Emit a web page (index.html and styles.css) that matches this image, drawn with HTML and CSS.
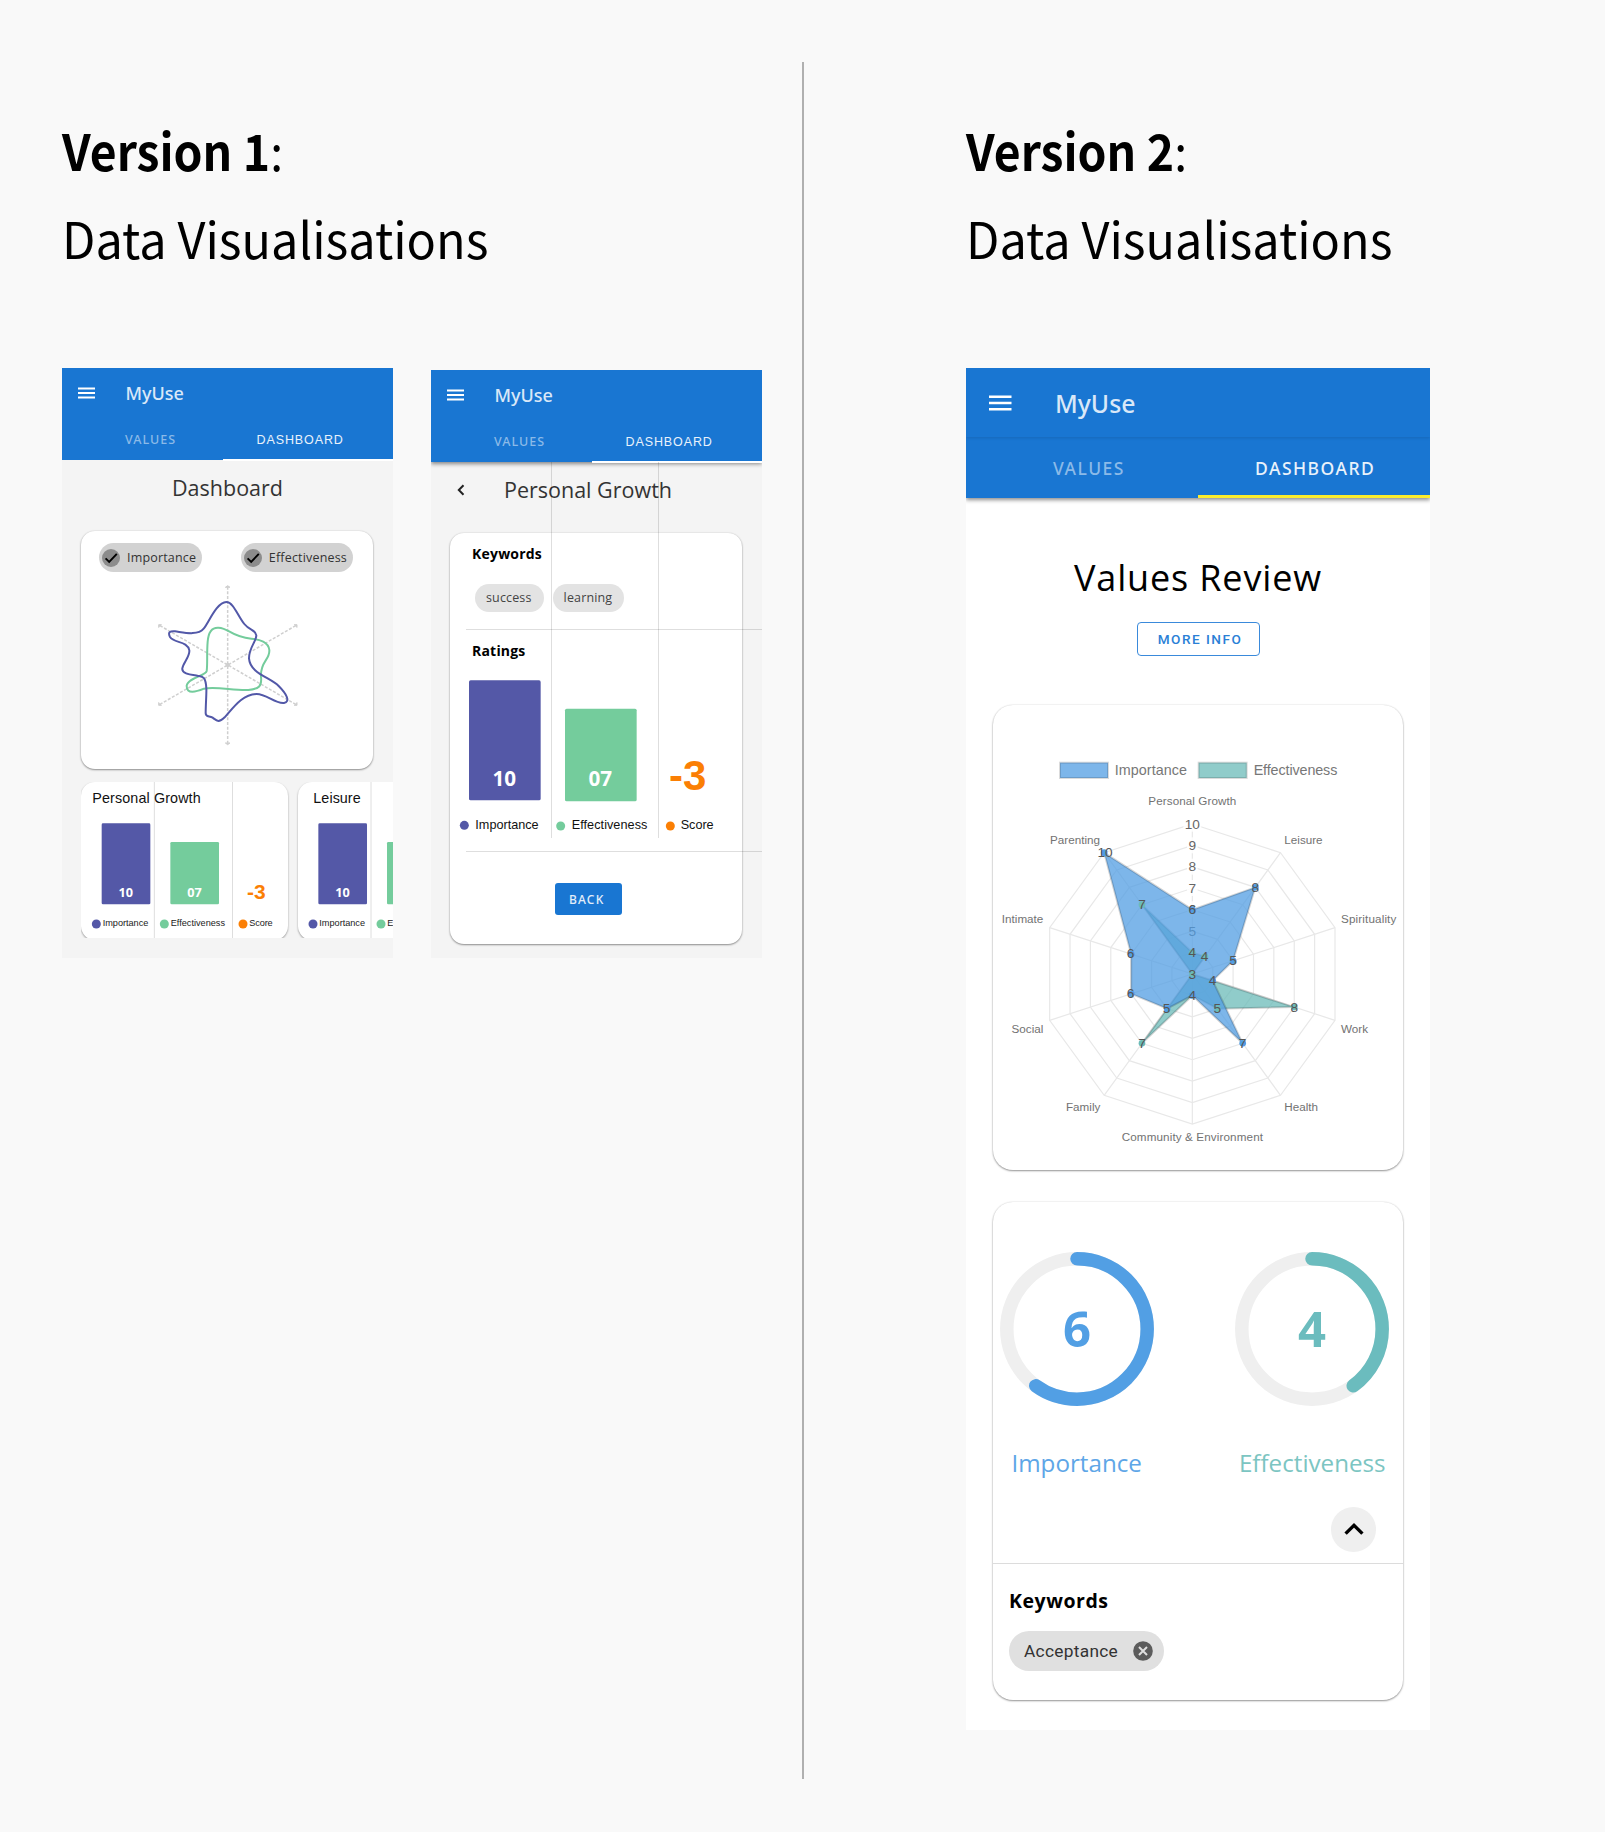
FILE: index.html
```html
<!DOCTYPE html>
<html lang="en">
<head>
<meta charset="utf-8">
<title>Data Visualisations</title>
<link rel="stylesheet" href="styles.css">
</head>
<body>
<main class="board">
  <section class="version version-one">
    <h2 class="heading"><span class="heading-main"><b>Version 1</b>:</span><span class="heading-sub">Data Visualisations</span></h2>
    <div class="phones">
      <article class="phone small">
        <header class="appbar">
          <div class="brand"><svg class="burger" viewBox="0 0 18 12"><path d="M0 1.2h18M0 6h18M0 10.8h18"/></svg><span class="name">MyUse</span></div>
          <nav class="tabs"><span class="tab">VALUES</span><span class="tab active plain">DASHBOARD</span></nav>
        </header>
        <div class="screen-title"><span class="title-text">Dashboard</span></div>
        <section class="card overview">
          <div class="filters">
            <span class="filter"><svg class="check" viewBox="0 0 18 18"><circle cx="9" cy="9" r="9"/><path d="M3.6 9.4l3.6 3.5 7.6-8"/></svg><span class="filter-text">Importance</span></span>
            <span class="filter"><svg class="check" viewBox="0 0 18 18"><circle cx="9" cy="9" r="9"/><path d="M3.6 9.4l3.6 3.5 7.6-8"/></svg><span class="filter-text">Effectiveness</span></span>
          </div>
          <svg class="blob" viewBox="93 60 876 510">
            <g class="axes">
              <path d="M533 80V551M330 197L737 433M737 197L330 433"/>
            </g>
            <g class="tips"><path d="M526 82l7-5 7 5zM526 549l7 5 7-5zM326 203V194h9M741 203V194h-9M326 427v9h9M741 427v9h-9"/><circle cx="533" cy="315" r="5"/></g>
            <path class="eff" d="M505 203C484 202 475 218 473 245C470 280 473 315 470 333C467 348 415 352 410 377C409 405 440 395 462 386C500 379 550 392 595 390C628 387 636 378 633 350C630 305 660 300 658 270C655 245 630 239 604 236C540 230 540 205 505 203Z"/>
            <path class="imp" d="M529 126C550 126 563 167 583 192C600 213 615 207 619 226C619 245 597 262 597 295C600 340 660 352 686 378C710 402 722 425 702 429C675 432 650 402 620 402C575 402 545 450 524 472C505 490 500 482 488 473C478 467 467 473 467 460C467 435 470 395 469 385C467 345 455 350 442 347C425 344 394 342 397 325C400 307 420 290 418 271C412 242 372 250 360 231C352 215 362 213 375 214C400 217 443 228 461 206C475 190 500 126 529 126Z"/>
          </svg>
        </section>
        <div class="carousel">
          <section class="mini">
            <svg viewBox="93 51 620 468" class="mini-chart">
              <path class="rule" d="M313 51V519M547.500 51V519"/>
              <text class="mini-title" x="127" y="115" textLength="325">Personal Growth</text>
              <rect class="bar-imp" x="155" y="175" width="146" height="243" rx="4"/>
              <rect class="bar-eff" x="361" y="231" width="146" height="187" rx="4"/>
              <text class="mini-num" x="227.500" y="396">10</text><text class="mini-num" x="433.500" y="396">07</text>
              <text class="mini-score" x="619" y="403">-3</text>
              <circle class="dot-imp" cx="139" cy="477" r="13.500"/><text class="mini-key" x="158" y="483" textLength="137">Importance</text>
              <circle class="dot-eff" cx="343" cy="477" r="13.500"/><text class="mini-key" x="362" y="483" textLength="163">Effectiveness</text>
              <circle class="dot-score" cx="579" cy="477" r="13.500"/><text class="mini-key" x="598" y="483" textLength="70">Score</text>
            </svg>
          </section>
          <section class="mini">
            <svg viewBox="743 51 620 468" class="mini-chart">
              <path class="rule" d="M962 51V519"/>
              <text class="mini-title" x="789" y="115" textLength="142">Leisure</text>
              <rect class="bar-imp" x="804" y="175" width="146" height="243" rx="4"/>
              <rect class="bar-eff" x="1010" y="231" width="146" height="187" rx="4"/>
              <text class="mini-num" x="876.500" y="396">10</text>
              <circle class="dot-imp" cx="788" cy="477" r="13.500"/><text class="mini-key" x="807" y="483" textLength="137">Importance</text>
              <circle class="dot-eff" cx="992" cy="477" r="13.500"/><text class="mini-key" x="1011" y="483" textLength="163">Effectiveness</text>
            </svg>
          </section>
        </div>
      </article>

      <article class="phone small detail">
        <header class="appbar raised">
          <div class="brand"><svg class="burger" viewBox="0 0 18 12"><path d="M0 1.2h18M0 6h18M0 10.8h18"/></svg><span class="name">MyUse</span></div>
          <nav class="tabs"><span class="tab">VALUES</span><span class="tab active plain">DASHBOARD</span></nav>
        </header>
        <div class="screen-title with-back"><svg class="back-arrow" viewBox="0 0 8 12"><path d="M6.500 1.200L1.800 6l4.700 4.800"/></svg><span class="title-text">Personal Growth</span></div>
        <section class="card sheet">
          <h3 class="label">Keywords</h3>
          <div class="tags"><span class="tag">success</span><span class="tag">learning</span></div>
          <h3 class="label ratings">Ratings</h3>
          <svg class="ratings-chart" viewBox="90 138 876 480">
            <rect class="bar-imp" x="147" y="151" width="215" height="360" rx="5"/>
            <rect class="bar-eff" x="435" y="236" width="215" height="278" rx="5"/>
            <text class="big-num" x="253" y="469">10</text><text class="big-num" x="541" y="469">07</text>
            <text class="big-score" x="803" y="480">-3</text>
            <circle class="dot-imp" cx="133" cy="586" r="13.500"/><text class="key" x="166" y="597" textLength="190">Importance</text>
            <circle class="dot-eff" cx="422" cy="588" r="13.500"/><text class="key" x="455" y="597" textLength="227">Effectiveness</text>
            <circle class="dot-score" cx="751" cy="588" r="13.500"/><text class="key" x="782" y="597" textLength="99">Score</text>
          </svg>
          <div class="actions"><button class="back">BACK</button></div>
        </section>
        <i class="guide v1"></i><i class="guide v2"></i><i class="guide h1"></i><i class="guide h2"></i>
      </article>
    </div>
  </section>

  <div class="divider"></div>

  <section class="version version-two">
    <h2 class="heading"><span class="heading-main"><b>Version 2</b>:</span><span class="heading-sub">Data Visualisations</span></h2>
    <article class="phone large">
      <header class="appbar raised">
        <div class="brand"><svg class="burger" viewBox="0 0 24 16"><path d="M0 1.400h24M0 8h24M0 14.600h24"/></svg><span class="name">MyUse</span></div>
        <nav class="tabs"><span class="tab">VALUES</span><span class="tab active">DASHBOARD</span></nav>
      </header>
      <h1 class="review">Values Review</h1>
      <button class="more">MORE INFO</button>
      <section class="card radar-card">
        <svg class="radar" viewBox="39 45 1230 1395">
          <g class="legend">
            <rect class="key-imp" x="240" y="218" width="144" height="46"/><text x="404" y="255" textLength="217">Importance</text>
            <rect class="key-eff" x="656" y="218" width="144" height="46"/><text x="821" y="255" textLength="251">Effectiveness</text>
          </g>
          <g transform="translate(637 852)">
            <defs><polygon id="ring" points="0,-450 264.500,-364 428,-139 428,139 264.500,364 0,450 -264.500,364 -428,139 -428,-139 -264.500,-364"/></defs>
            <g class="grid">
              <use href="#ring"/><use href="#ring" transform="scale(.8571)"/><use href="#ring" transform="scale(.7143)"/><use href="#ring" transform="scale(.5714)"/><use href="#ring" transform="scale(.4286)"/><use href="#ring" transform="scale(.2857)"/><use href="#ring" transform="scale(.1429)"/>
              <path d="M0-450V450M264.500-364L-264.500 364M428-139L-428 139M428 139L-428-139M264.500 364L-264.500-364"/>
            </g>
            <g class="backdrop"><rect x="-27" y="-475" width="54" height="48"/><rect x="-16" y="-410" width="32" height="48"/><rect x="-16" y="-346" width="32" height="48"/><rect x="-16" y="-282" width="32" height="48"/><rect x="-16" y="-218" width="32" height="48"/></g>
            <g class="ticks"><text y="-436">10</text><text y="-372">9</text><text y="-308">8</text><text y="-243">7</text><text y="-179">6</text><text y="-115">5</text></g>
            <polygon class="area-eff" points="0,-64.300 37.800,-52 0,0 305.700,99.300 75.600,104 0,64.300 -151.100,208 0,0 -151.100,-208"/>
            <polygon class="area-imp" points="0,-192.900 188.900,-260 122.300,-39.700 61.100,19.900 151.100,208 0,64.300 -75.600,104 -183.400,59.600 -183.400,-59.600 -264.500,-364"/>
            <g class="points-eff"><circle cy="-64.300" r="10"/><circle cx="37.800" cy="-52" r="10"/><circle r="10"/><circle cx="305.700" cy="99.300" r="10"/><circle cx="75.600" cy="104" r="10"/><circle cx="-151.100" cy="208" r="10"/><circle cx="-151.100" cy="-208" r="10"/></g>
            <g class="points-imp"><circle cy="-192.900" r="10"/><circle cx="188.900" cy="-260" r="10"/><circle cx="122.300" cy="-39.700" r="10"/><circle cx="61.100" cy="19.900" r="10"/><circle cx="151.100" cy="208" r="10"/><circle cy="64.300" r="10"/><circle cx="-75.600" cy="104" r="10"/><circle cx="-183.400" cy="59.600" r="10"/><circle cx="-183.400" cy="-59.600" r="10"/><circle cx="-264.500" cy="-364" r="10"/></g>
            <g class="values"><text y="-179">6</text><text x="189" y="-246">8</text><text x="122" y="-26">5</text><text x="61" y="33">4</text><text x="151" y="221">7</text><text y="77">4</text><text x="-77" y="118">5</text><text x="-185" y="73">6</text><text x="-185" y="-47">6</text><text x="-262" y="-351">10</text><text y="-51">4</text><text x="37" y="-38">4</text><text y="14">3</text><text x="306" y="113">8</text><text x="75" y="118">5</text><text x="-151" y="221">7</text><text x="-151" y="-195">7</text></g>
          </g>
          <g class="names">
            <text x="505" y="344" textLength="264">Personal Growth</text><text x="913" y="463">Leisure</text><text x="1083" y="698" textLength="166">Spirituality</text><text x="1083" y="1030">Work</text><text x="913" y="1264">Health</text>
            <text x="425" y="1353" textLength="424">Community &amp; Environment</text><text class="end" x="361" y="1264">Family</text><text class="end" x="190" y="1030">Social</text><text class="end" x="190" y="698">Intimate</text><text class="end" x="360" y="463">Parenting</text>
          </g>
        </svg>
      </section>
      <section class="card scores">
        <div class="gauges">
          <figure class="gauge imp-gauge"><svg viewBox="0 0 154 154"><circle class="track" cx="77" cy="77" r="70.200"/><circle class="value" cx="77" cy="77" r="70.200" pathLength="10" stroke-dasharray="6 10" transform="rotate(-90 77 77)"/><text x="77" y="95">6</text></svg><figcaption>Importance</figcaption></figure>
          <figure class="gauge eff-gauge"><svg viewBox="0 0 154 154"><circle class="track" cx="77" cy="77" r="70.200"/><circle class="value" cx="77" cy="77" r="70.200" pathLength="10" stroke-dasharray="4 10" transform="rotate(-90 77 77)"/><text x="77" y="95">4</text></svg><figcaption>Effectiveness</figcaption></figure>
        </div>
        <div class="collapse"><button class="toggle"><svg viewBox="0 0 20 13"><path d="M1.600 10.600L10 2.400l8.400 8.200"/></svg></button></div>
        <div class="keywords">
          <h3>Keywords</h3>
          <span class="chip"><span class="chip-text">Acceptance</span><svg class="remove" viewBox="0 0 20 20"><circle cx="10" cy="10" r="9.800"/><path d="M6 6l8 8M14 6l-8 8"/></svg></span>
        </div>
      </section>
    </article>
  </section>
</main>
</body>
</html>
```
FILE: styles.css
```css
* { box-sizing: border-box; }
body { margin: 0; background: #f9f9f9; font-family: "Open Sans", "Noto Sans", sans-serif; color: #000; }
h1, h2, h3, figure { margin: 0; font-weight: 400; }
button { font-family: inherit; margin: 0; padding: 0; border: 0; }
svg { display: block; }

.board { display: flex; height: 1832px; overflow: hidden; }
.version { padding-top: 105px; }
.version-one { width: 802px; padding-left: 62px; }
.version-two { padding-left: 162.500px; }
.divider { width: 1.5px; height: 1717px; margin-top: 62px; background: #b0b0b0; }

.heading { height: 263px; font: 50px/88px "Noto Sans CJK SC", "Noto Sans", sans-serif; }
.heading-main, .heading-sub { display: block; width: max-content; transform-origin: left; }
.heading-main { transform: scaleX(.927); }
.heading-sub { transform: scaleX(.972); }

.phones { display: flex; align-items: flex-start; gap: 38px; }
.phone { position: relative; overflow: hidden; }
.small { width: 331px; height: 590px; background: #f4f4f4; }
.detail { height: 588px; margin-top: 2px; }
.large { width: 464px; height: 1362px; background: #fff; }

.appbar { position: relative; background: #1976d2; color: #fff; }
.raised { box-shadow: 0 2px 4px rgba(0, 0, 0, .45); }
.brand { display: flex; align-items: center; }
.burger path { stroke: #fff; fill: none; }
.name { color: #d9e8f8; font-family: "Noto Sans", sans-serif; font-weight: 500; }
.tabs { display: grid; }
.tab { color: #8bbae8; font-family: "Noto Sans", sans-serif; font-weight: 500; }
.tab.active { position: relative; color: #e9f2fb; }
.tab.active::after { content: ""; position: absolute; left: 0; right: 0; bottom: 0; background: #fff; }

.small .appbar { height: 92px; }
.small .brand { height: 50px; padding-left: 16px; }
.small .burger { width: 17px; height: 12px; }
.small .burger path { stroke-width: 2; }
.small .name { margin-left: 30.500px; font-size: 18px; line-height: 50px; }
.small .tabs { grid-template: 42px / 160.500px 1fr; }
.small .tab { padding-left: 63px; font-size: 12.500px; line-height: 44px; letter-spacing: 1.050px; }
.small .tab.active { padding-left: 34px; }
.small .tab.plain { font-family: "Liberation Sans", sans-serif; font-weight: 400; letter-spacing: .900px; }
.small .tab.active::after { height: 2px; bottom: -1px; }

.screen-title { height: 71px; font-size: 21.500px; line-height: 55px; text-align: center; color: #333; }
.with-back { display: flex; text-align: left; }
.back-arrow { width: 8px; height: 12px; margin: 22px 39px 0 26px; }
.back-arrow path { fill: none; stroke: #222; stroke-width: 2; }

.card { background: #fff; border-radius: 14px; box-shadow: 0 1px 2px rgba(0, 0, 0, .4), 0 0 2px rgba(0, 0, 0, .12); }
.small .card { width: 292px; margin-left: 19px; }
.overview { height: 238px; padding-top: 12px; }
.filters { display: flex; justify-content: space-between; padding: 0 20px 0 18px; }
.filter { display: flex; align-items: center; height: 29px; padding: 0 6px 0 3px; border-radius: 15px; background: #d2d2d2; color: #333; font-size: 12.500px; letter-spacing: .180px; }
.check { width: 18px; height: 18px; margin-right: 7px; }
.check circle { fill: #8c8c8c; }
.check path { fill: none; stroke: #000; stroke-width: 1.900; }
.blob { width: 292px; height: 170px; margin-top: 8px; }
.axes path { fill: none; stroke: #cfcfcf; stroke-width: 4.500; stroke-dasharray: 9 5; }
.tips path, .tips circle { fill: #d0d0d0; stroke: #d0d0d0; stroke-width: 3; }
.blob .imp, .blob .eff { fill: none; stroke-width: 6; }
.blob .imp { stroke: #5258a8; }
.blob .eff { stroke: #74cc9c; }

.carousel { display: flex; gap: 9.600px; margin: 13px 0 0 19.300px; height: 156px; overflow: hidden; }
.mini { flex: none; width: 206.700px; height: 158px; border-radius: 14px; background: #fff; box-shadow: 0 1px 2px rgba(0, 0, 0, .4); overflow: hidden; }
.mini-chart { width: 206.700px; height: 156px; }
.rule { stroke: #dedede; stroke-width: 3; }
.bar-imp, .dot-imp { fill: #5458a7; }
.bar-eff, .dot-eff { fill: #74cc9c; }
.dot-score { fill: #fb7f04; }
.mini-title { font: 43px "Liberation Sans", sans-serif; fill: #111; }
.mini-key { font: 27.500px "Liberation Sans", sans-serif; fill: #222; }
.key { font: 38px "Liberation Sans", sans-serif; fill: #111; }
.mini-num, .big-num { font: 700 38px "Open Sans", sans-serif; fill: #fff; text-anchor: middle; }
.big-num { font-size: 62px; }
.mini-score, .big-score { font: 700 63px "Liberation Sans", sans-serif; fill: #fb7f04; text-anchor: middle; }
.big-score { font-size: 126px; }

.sheet { height: 411px; }
.label { height: 43px; padding-left: 22px; font-size: 14px; font-weight: 700; line-height: 42px; letter-spacing: .200px; }
.tags { display: flex; gap: 9px; padding: 8px 0 0 25px; }
.tag { height: 28px; padding: 0 12px 0 11px; border-radius: 14px; background: #e3e3e3; color: #444; font-size: 12.500px; line-height: 28px; letter-spacing: .150px; }
.label.ratings { margin-top: 18px; line-height: 42px; height: 46px; }
.ratings-chart { width: 292px; height: 160px; }
.actions { display: flex; margin: 47px 0 0 105px; }
.back { width: 66.500px; height: 31.500px; padding: 1px 3px 0 0; text-align: center; border-radius: 3px; background: #1976d2; color: #e3eefa; font: 500 12px "Noto Sans", sans-serif; letter-spacing: 1.200px; }
.guide { position: absolute; background: rgba(0, 0, 0, .13); }
.v1, .v2 { top: 92px; width: 1px; height: 376px; }
.v1 { left: 120px; }
.v2 { left: 227px; }
.h1, .h2 { left: 35px; right: 0; height: 1px; }
.h1 { top: 259px; }
.h2 { top: 481px; }

.large .appbar { height: 130px; }
.large .brand { height: 69px; padding-left: 23px; box-shadow: 0 1px 3px rgba(0, 0, 0, .12); }
.large .burger { width: 22.500px; height: 16px; }
.large .burger path { stroke-width: 2.700; }
.large .name { margin-left: 43.500px; padding-top: 1px; font-size: 24.800px; line-height: 69px; }
.large .tabs { grid-template: 61px / 1fr 1fr; }
.large .tab { padding-left: 87px; font-size: 17.500px; line-height: 62px; letter-spacing: 1.500px; }
.large .tab.active { padding-left: 57px; }
.large .tab.active::after { height: 3px; background: #fbec2d; }
.review { height: 124px; padding-top: 50px; font-size: 36px; line-height: 60px; letter-spacing: .850px; text-align: center; }
.more { display: block; width: 123px; height: 34px; margin: 0 auto; padding: 0 0 0 4px; border: 1.500px solid #3a8adb; border-radius: 4px; background: #fff; color: #2a80d6; font: 500 13.600px Roboto, sans-serif; letter-spacing: 1.500px; }
.large .card { width: 410px; margin-left: 27px; border-radius: 20px; }
.radar-card { height: 465px; margin-top: 49px; }
.radar { width: 410px; height: 465px; font-family: "Liberation Sans", sans-serif; }
.legend text { font-size: 43px; fill: #777; }
.legend rect { stroke: rgba(0, 0, 0, .14); stroke-width: 6; }
.key-imp, .area-imp { fill: rgba(82, 157, 227, .75); }
.key-eff, .area-eff { fill: rgba(107, 187, 184, .75); }
.area-imp, .area-eff { stroke: rgba(0, 0, 0, .17); stroke-width: 6; stroke-linejoin: round; }
.grid { fill: none; stroke: #e8e8e8; }
.grid path, #ring { vector-effect: non-scaling-stroke; stroke-width: 1.200px; }
.backdrop { fill: rgba(255, 255, 255, .85); }
.ticks, .values { font-size: 41px; fill: #666; text-anchor: middle; }
.values { fill: #555; }
.points-imp { fill: #529de3; }
.points-eff { fill: #6bbbb8; }
.names { font-size: 35px; fill: #727272; }
.end { text-anchor: end; }

.scores { height: 498px; margin-top: 32px; }
.gauges { display: flex; gap: 81.600px; height: 305px; padding: 50px 0 0 6.700px; }
.gauge { width: 154px; }
.gauge svg { width: 154px; height: 154px; overflow: visible; }
.gauge circle { fill: none; stroke-width: 13.500; }
.gauge .track { stroke: #efefef; }
.value { stroke-linecap: round; }
.gauge text { font: 700 49px "Open Sans", sans-serif; text-anchor: middle; }
figcaption { font-size: 24.200px; line-height: 114px; text-align: center; }
.imp-gauge { color: #5ea6e7; }
.eff-gauge { color: #7cc5c2; }
.imp-gauge .value { stroke: #529fe4; }
.eff-gauge .value { stroke: #6bbcbe; }
.imp-gauge text { fill: #529fe4; }
.eff-gauge text { fill: #6bbcbe; }
.collapse { display: flex; justify-content: flex-end; height: 57px; padding-right: 27px; border-bottom: 1.500px solid #dcdcdc; }
.toggle { display: grid; place-items: center; width: 44.600px; height: 44.600px; border-radius: 50%; background: #efefef; }
.toggle svg { width: 20px; height: 13px; }
.toggle path { fill: none; stroke: #000; stroke-width: 3.400; }
.keywords { padding-left: 16px; }
.keywords h3 { height: 67px; padding-top: 18px; font-size: 19.500px; font-weight: 700; line-height: 38px; letter-spacing: .550px; }
.chip { display: inline-flex; align-items: center; height: 40px; padding: 0 11px 0 15px; border-radius: 20px; background: #e0e0e0; }
.chip-text { font: 17.300px Roboto, sans-serif; letter-spacing: .300px; color: #333; }
.remove { width: 20px; height: 20px; margin-left: 15px; }
.remove circle { fill: #5c5c5c; }
.remove path { stroke: #e0e0e0; stroke-width: 2; }
```
